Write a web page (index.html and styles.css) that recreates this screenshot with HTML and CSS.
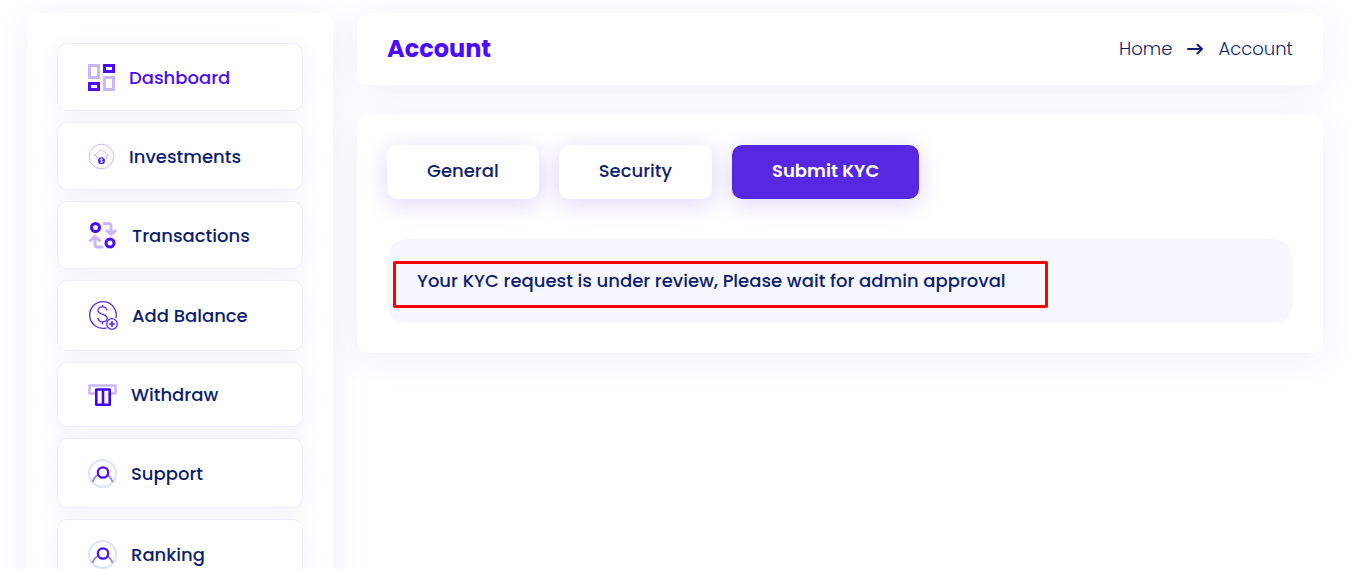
FILE: index.html
```html
<!DOCTYPE html>
<html lang="en">
<head>
<meta charset="utf-8">
<meta name="viewport" content="width=device-width, initial-scale=1">
<title>Account</title>
<link rel="stylesheet" href="styles.css">
</head>
<body>
<div class="page">
  <aside class="card sidebar">
    <nav class="menu" aria-label="Main">
      <a class="menu-item is-active" href="#">
        <svg width="27" height="28" viewBox="0 0 27 28" fill="none" stroke-width="3"><path d="M1.5 2.5h9v12h-9zM16.5 14.5h9v12h-9z" stroke="#cab6ff"/><path d="M16.5 2.5h9v6h-9zM1.5 20.5h9v6h-9z" stroke="#4b0bff"/></svg>
        <span>Dashboard</span>
      </a>
      <a class="menu-item" href="#">
        <svg width="27" height="28" viewBox="0 0 27 28" fill="none"><circle cx="13.5" cy="14.5" r="12.3" stroke="#cab6ff"/><path d="M10 16H8.500v-2.500H6L13.500 7.500 21 13.500h-2.500V16H17" stroke="#cab6ff" stroke-width=".9" stroke-linejoin="round"/><circle cx="13.500" cy="18.800" r="3.500" fill="#4a22e0"/><path d="M14.900 17.500c-.5-.7-2.600-.7-2.600.3 0 1.100 2.500.8 2.500 1.900 0 1-2.200 1-2.800.2M13.500 16.500v4.600" stroke="#fff" stroke-width=".8"/></svg>
        <span>Investments</span>
      </a>
      <a class="menu-item" href="#">
        <svg width="30" height="28" viewBox="0 0 30 28" fill="none" stroke-width="3"><circle cx="7.500" cy="6.500" r="4" stroke="#4b0bff"/><circle cx="22" cy="22" r="4" stroke="#4b0bff"/><path d="M15 2.500h5.500q2.500 0 2.500 2.500v7M18 9l5 4.500L28 9M15 26H9.500Q7 26 7 23.500v-7M1.500 20.500l5.500-5 5.500 5" stroke="#cab6ff"/></svg>
        <span>Transactions</span>
      </a>
      <a class="menu-item" href="#">
        <svg width="30" height="31" viewBox="0 0 30 31" fill="none" stroke="#5a2be8" stroke-width="1.300"><path d="M18.500 27.800A13.300 13.300 0 1 1 27.900 18"/><path d="M19 10.500c0-5-9-4.500-9 .1 0 5 9.200 2.500 9.200 7.600 0 4.900-9.200 5-9.200-.4M14.600 5v2.500M14.600 21.700v2.500"/><circle cx="24" cy="24" r="5.300"/><path d="M21 24h6M24 21v6" stroke-width="1.700"/></svg>
        <span>Add Balance</span>
      </a>
      <a class="menu-item" href="#">
        <svg width="29" height="25" viewBox="0 0 29 25" fill="none"><path d="M8 11.500H1.500v-8h26v8H22" stroke="#cab6ff" stroke-width="2.600" stroke-linejoin="round"/><path d="M8.300 7.500h13.400v15.200H8.300zM15 8v14" stroke="#4308ed" stroke-width="2.600" stroke-linejoin="round"/></svg>
        <span>Withdraw</span>
      </a>
      <a class="menu-item" href="#">
        <svg width="29" height="30" viewBox="0 0 29 30" fill="none" stroke-width="2"><circle cx="14.500" cy="15.500" r="13.500" stroke="#dce3ff"/><path d="M4.500 24q1.500-5 6-7.500M24.500 24q-1.500-5-6-7.500" stroke="#8f8bee"/><circle cx="15" cy="14.500" r="5.200" stroke="#4a0bff" stroke-width="2.200"/></svg>
        <span>Support</span>
      </a>
      <a class="menu-item" href="#">
        <svg width="29" height="30" viewBox="0 0 29 30" fill="none" stroke-width="2"><circle cx="14.500" cy="15.500" r="13.500" stroke="#dce3ff"/><path d="M4.500 24q1.500-5 6-7.500M24.500 24q-1.500-5-6-7.500" stroke="#8f8bee"/><circle cx="15" cy="14.500" r="5.200" stroke="#4a0bff" stroke-width="2.200"/></svg>
        <span>Ranking</span>
      </a>
    </nav>
  </aside>
  <main class="content">
    <header class="card page-head">
      <h1 class="title">Account</h1>
      <nav class="crumbs" aria-label="Breadcrumb">
        <a class="crumb" href="#">Home</a>
        <svg width="16" height="12" viewBox="0 0 16 12" fill="none" stroke="#0d1c6d" stroke-width="2" stroke-linecap="round" stroke-linejoin="round"><path d="M1 6h14M10.500 1.700 15 6l-4.500 4.300"/></svg>
        <span class="crumb">Account</span>
      </nav>
    </header>
    <section class="card panel">
      <div class="tabs">
        <button class="tab" type="button">General</button>
        <button class="tab" type="button">Security</button>
        <button class="tab is-current" type="button">Submit KYC</button>
      </div>
      <div class="notice">
        <p class="notice-text">Your KYC request is under review, Please wait for admin approval</p>
      </div>
    </section>
  </main>
</div>
</body>
</html>
```
FILE: styles.css
```css
* { box-sizing: border-box; }
body {
  margin: 0;
  height: 100vh;
  overflow: hidden;
  background: #fff;
  color: #0e1e6e;
  font: 500 18px/24px Poppins, Inter, sans-serif;
}
a { color: inherit; text-decoration: none; }
svg { display: block; flex: none; }
.page {
  display: grid;
  grid-template-columns: repeat(12, minmax(0, 1fr));
  gap: 24px;
  padding: 13px 30px 30px 27px;
}
.card {
  background: #fff;
  border-radius: 10px;
  box-shadow: 0 5px 35px rgba(82, 72, 220, 0.09);
}
.sidebar { grid-column: span 3; padding: 30px; }
.menu { display: flex; flex-direction: column; gap: 11px; }
.menu-item {
  display: flex;
  align-items: center;
  gap: 14px;
  padding: 19px 30px;
  border: 1px solid #f1edff;
  border-radius: 10px;
  background: #fff;
  box-shadow: 0 5px 25px rgba(72, 72, 190, 0.07);
}
.menu-item span { padding-top: 1px; }
.menu-item.is-active { color: #4b0bff; }
.content {
  grid-column: span 9;
  display: flex;
  flex-direction: column;
  gap: 30px;
}
.page-head {
  display: flex;
  flex-wrap: wrap;
  align-items: center;
  justify-content: space-between;
  padding: 20px 30px;
}
.title { margin: 0; color: #4b0bff; font-size: 24px; line-height: 32px; font-weight: 700; }
.crumbs { display: flex; align-items: center; gap: 15px; font-weight: 300; }
.panel { padding: 30px; }
.tabs { display: flex; flex-wrap: wrap; gap: 20px; margin-bottom: 40px; }
.tab {
  padding: 14px 40px 16px;
  border: 0;
  border-radius: 10px;
  background: #fff;
  color: inherit;
  font: inherit;
  box-shadow: 0 5px 25px rgba(88, 39, 225, 0.2);
}
.tab.is-current { background: #5827e1; color: #fff; font-weight: 600; }
.notice { padding: 30px; border-radius: 20px; background: #f7f7ff; }
.notice-text { position: relative; width: fit-content; margin: 0; }
.notice-text::after {
  content: "";
  position: absolute;
  inset: -8px -42px -15px -24px;
  border: 3px solid #f00;
  border-radius: 2px;
}
```
